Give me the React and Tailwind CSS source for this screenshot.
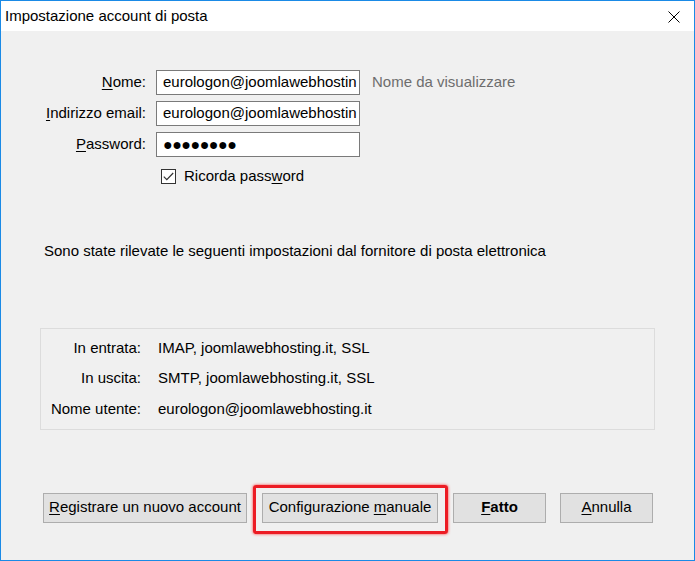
import React from 'react';

const FONT = { fontFamily: '"Liberation Sans", Arial, sans-serif' };

function Key({ children }) {
  return <span className="underline underline-offset-2">{children}</span>;
}

function Field({ label, children }) {
  return (
    <>
      <label className="flex h-[25px] items-center justify-end text-[15px] text-black">{label}</label>
      {children}
    </>
  );
}

function TextBox({ value, dots }) {
  return (
    <div className="flex h-[25px] w-[204px] items-center overflow-hidden whitespace-nowrap border border-[#7a7a7a] bg-white pl-[6px] text-[15px] text-black">
      {dots ? <span className="text-[16px] font-bold tracking-[-0.5px]">●●●●●●●●</span> : value}
    </div>
  );
}

function Button({ children, bold, className = '' }) {
  return (
    <button className={`h-[30px] border border-[#adadad] bg-[#e1e1e1] text-[15px] text-black ${bold ? 'font-bold' : ''} ${className}`}>
      {children}
    </button>
  );
}

export default function App() {
  return (
    <div style={FONT} className="flex h-[561px] w-[695px] flex-col border border-[#1a8ae6] bg-[#f0f0f0]">
      <div className="flex h-[30px] shrink-0 items-center justify-between bg-white pl-[4px] pr-[14px] pt-[1px]">
        <span className="text-[15px] text-black">Impostazione account di posta</span>
        <svg width="12" height="12" viewBox="0 0 12 12" className="text-black">
          <path d="M0.5 0.5 L11.5 11.5 M11.5 0.5 L0.5 11.5" stroke="currentColor" strokeWidth="1" />
        </svg>
      </div>

      <div className="flex flex-1 flex-col">
        <div className="mt-[39px] grid grid-cols-[145px_204px_auto] items-center gap-x-[10px] gap-y-[6px]">
          <Field label={<span><Key>N</Key>ome:</span>}>
            <TextBox value="eurologon@joomlawebhostin" />
          </Field>
          <span className="pl-[2px] text-[15px] text-[#6d6d6d]">Nome da visualizzare</span>
          <Field label={<span><Key>I</Key>ndirizzo email:</span>}>
            <TextBox value="eurologon@joomlawebhostin" />
          </Field>
          <span />
          <Field label={<span><Key>P</Key>assword:</span>}>
            <TextBox dots />
          </Field>
          <span />
        </div>

        <div className="mt-[8px] flex items-center gap-[8px] pl-[160px]">
          <div className="flex h-[15px] w-[15px] items-center justify-center border border-[#333] bg-white">
            <svg width="11" height="9" viewBox="0 0 11 9">
              <path d="M0.8 4.6 L3.8 7.6 L10.2 1" fill="none" stroke="#333" strokeWidth="1.2" />
            </svg>
          </div>
          <span className="text-[15px] text-black">Ricorda pass<Key>w</Key>ord</span>
        </div>

        <p className="mt-[53px] pl-[43px] text-[15px] leading-[20px] text-black">
          Sono state rilevate le seguenti impostazioni dal fornitore di posta elettronica
        </p>

        <div className="ml-[39px] mr-[39px] mt-[67px] flex h-[102px] flex-col border border-[#dcdcdc] pt-[4px]">
          {[
            ['In entrata:', 'IMAP, joomlawebhosting.it, SSL'],
            ['In uscita:', 'SMTP, joomlawebhosting.it, SSL'],
            ['Nome utente:', 'eurologon@joomlawebhosting.it'],
          ].map(([k, v]) => (
            <div key={k} className="flex h-[30.5px] items-center gap-[17px] text-[15px] text-black">
              <span className="w-[100px] text-right">{k}</span>
              <span>{v}</span>
            </div>
          ))}
        </div>

        <div className="mt-[63px] flex items-start pl-[42px]">
          <Button className="w-[204px]"><Key>R</Key>egistrare un nuovo account</Button>
          <span className="relative ml-[15px]">
            <Button className="w-[176px]">Configurazione <Key>m</Key>anuale</Button>
            <span className="pointer-events-none absolute -bottom-[11px] -left-[9px] -right-[10px] -top-[8px] rounded-[3px] border-[3px] border-[#ec1c24] shadow-[0_0_3px_#ff3030]" />
          </span>
          <Button bold className="ml-[15px] w-[93px]"><Key>F</Key>atto</Button>
          <Button className="ml-[14px] w-[93px]"><Key>A</Key>nnulla</Button>
        </div>
      </div>
    </div>
  );
}
